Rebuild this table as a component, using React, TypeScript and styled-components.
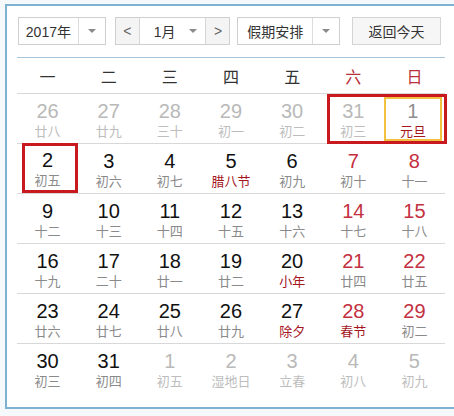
import React from "react";
import styled, { createGlobalStyle } from "styled-components";

const Global = createGlobalStyle`
  html, body { margin: 0; padding: 0; background: #f6f9fb; overflow: hidden; }
  body { font-family: "Liberation Sans", "Noto Sans CJK SC", sans-serif; }
`;

const Frame = styled.div`
  box-sizing: border-box;
  margin: 4px 0 0 5px;
  width: 470px;
  height: 405px;
  background: #fff;
  border: 2px solid #7fb1d1;
  border-right: none;
  padding: 11px 0 0 10px;
`;

const Toolbar = styled.div`
  display: flex;
  align-items: stretch;
  height: 28px;
  width: 423px;
  margin-left: 1px;
`;

const Select = styled.div<{ $w: number; $ml: number }>`
  box-sizing: border-box;
  display: flex;
  width: ${(p) => p.$w}px;
  margin-left: ${(p) => p.$ml}px;
  border: 1px solid #cfcfcf;
  background: #fff;
  color: #333;
  font-size: 14px;
`;

const SelectText = styled.div<{ $start?: boolean }>`
  flex: 1;
  display: flex;
  align-items: center;
  justify-content: ${(p) => (p.$start ? "flex-start" : "center")};
  padding-left: ${(p) => (p.$start ? "14px" : "0")};
`;

const ArrowBox = styled.div<{ $w: number; $divider?: boolean }>`
  width: ${(p) => p.$w}px;
  display: flex;
  align-items: center;
  justify-content: center;
  border-left: ${(p) => (p.$divider ? "1px solid #dcdcdc" : "none")};
`;

const Tri = styled.span`
  width: 0;
  height: 0;
  border-left: 4px solid transparent;
  border-right: 4px solid transparent;
  border-top: 4px solid #8a8a8a;
`;

const NavBtn = styled.div<{ $side: "l" | "r" }>`
  width: 23px;
  display: flex;
  align-items: center;
  justify-content: center;
  background: #f4f4f4;
  color: #666;
  font-size: 14px;
  border-${(p) => (p.$side === "l" ? "right" : "left")}: 1px solid #d6d6d6;
`;

const Button = styled.div`
  box-sizing: border-box;
  width: 89px;
  margin-left: 12px;
  border: 1px solid #d4d4d4;
  background: #f6f6f6;
  color: #333;
  font-size: 14px;
  display: flex;
  align-items: center;
  justify-content: center;
`;

const Calendar = styled.div`
  width: 428px;
  margin-top: 12px;
  border-top: 1px solid #a9c6da;
`;

const WeekRow = styled.div`
  display: grid;
  grid-template-columns: repeat(7, 1fr);
  height: 35px;
  border-bottom: 1px solid #d8d8d8;
`;

const WeekDay = styled.div<{ $red?: boolean }>`
  display: flex;
  align-items: center;
  justify-content: center;
  font-size: 16px;
  color: ${(p) => (p.$red ? "#b8303c" : "#333")};
`;

const Row = styled.div<{ $last?: boolean }>`
  display: grid;
  grid-template-columns: repeat(7, minmax(0, 1fr));
  height: 50px;
  box-sizing: border-box;
  border-bottom: ${(p) => (p.$last ? "none" : "1px solid #d8d8d8")};
`;

type Mark = "none" | "box" | "left" | "right";

const RED = "#c8191e";

const markStyle = (m: Mark) => {
  switch (m) {
    case "box":
      return `border: 3px solid ${RED}; margin: -1px 0 0 5px; padding-right: 5px;`;
    case "left":
      return `border: 3px solid ${RED}; border-right: none; margin-left: 4px; padding-right: 7px;`;
    case "right":
      return `border: 3px solid ${RED}; border-left: none; margin-right: -2px; padding-right: 2px;`;
    default:
      return `border: 3px solid transparent;`;
  }
};

const Cell = styled.div<{ $mark: Mark }>`
  box-sizing: border-box;
  height: 50px;
  display: flex;
  ${(p) => markStyle(p.$mark)}
`;

const Inner = styled.div<{ $today?: boolean }>`
  flex: 1;
  box-sizing: border-box;
  border: 2px solid ${(p) => (p.$today ? "#f2c141" : "transparent")};
  display: flex;
  flex-direction: column;
  align-items: center;
  padding-top: 1px;
`;

const Num = styled.div<{ $c: string }>`
  font-size: 20px;
  line-height: 22px;
  color: ${(p) => p.$c};
`;

const Lunar = styled.div<{ $c: string }>`
  margin-top: 2px;
  font-size: 13px;
  line-height: 15px;
  color: ${(p) => p.$c};
`;

type Day = {
  n: number;
  l: string;
  kind: "out" | "norm" | "wk";
  fest?: boolean;
  mark?: Mark;
  today?: boolean;
};

const g = (n: number, l: string): Day => ({ n, l, kind: "out" });
const d = (n: number, l: string, fest = false): Day => ({ n, l, kind: "norm", fest });
const w = (n: number, l: string, fest = false): Day => ({ n, l, kind: "wk", fest });

const rows: Day[][] = [
  [
    g(26, "廿八"),
    g(27, "廿九"),
    g(28, "三十"),
    g(29, "初一"),
    g(30, "初二"),
    { n: 31, l: "初三", kind: "out", mark: "left" },
    { n: 1, l: "元旦", kind: "out", fest: true, mark: "right", today: true },
  ],
  [
    { n: 2, l: "初五", kind: "norm", mark: "box" },
    d(3, "初六"),
    d(4, "初七"),
    d(5, "腊八节", true),
    d(6, "初九"),
    w(7, "初十"),
    w(8, "十一"),
  ],
  [d(9, "十二"), d(10, "十三"), d(11, "十四"), d(12, "十五"), d(13, "十六"), w(14, "十七"), w(15, "十八")],
  [d(16, "十九"), d(17, "二十"), d(18, "廿一"), d(19, "廿二"), d(20, "小年", true), w(21, "廿四"), w(22, "廿五")],
  [d(23, "廿六"), d(24, "廿七"), d(25, "廿八"), d(26, "廿九"), d(27, "除夕", true), w(28, "春节", true), w(29, "初二")],
  [d(30, "初三"), d(31, "初四"), g(1, "初五"), g(2, "湿地日"), g(3, "立春"), g(4, "初八"), g(5, "初九")],
];

const numColor = (x: Day) =>
  x.today ? "#8f8f8f" : x.kind === "out" ? "#b9b9b9" : x.kind === "wk" ? "#c3303f" : "#111";
const lunarColor = (x: Day) =>
  x.fest ? "#a5161d" : x.kind === "out" ? "#bdbdbd" : "#8a8a8a";

const weekDays = ["一", "二", "三", "四", "五", "六", "日"];

export default function App() {
  return (
    <>
      <Global />
      <Frame>
        <Toolbar>
          <Select $w={88} $ml={0}>
            <SelectText>2017年</SelectText>
            <ArrowBox $w={26} $divider>
              <Tri />
            </ArrowBox>
          </Select>
          <Select $w={116} $ml={9}>
            <NavBtn $side="l">&lt;</NavBtn>
            <SelectText $start>1月</SelectText>
            <ArrowBox $w={24}>
              <Tri />
            </ArrowBox>
            <NavBtn $side="r">&gt;</NavBtn>
          </Select>
          <Select $w={103} $ml={7}>
            <SelectText>假期安排</SelectText>
            <ArrowBox $w={26} $divider>
              <Tri />
            </ArrowBox>
          </Select>
          <Button>返回今天</Button>
        </Toolbar>
        <Calendar>
          <WeekRow>
            {weekDays.map((x, i) => (
              <WeekDay key={x} $red={i >= 5}>
                {x}
              </WeekDay>
            ))}
          </WeekRow>
          {rows.map((r, ri) => (
            <Row key={ri} $last={ri === rows.length - 1}>
              {r.map((x, ci) => (
                <Cell key={ci} $mark={x.mark ?? "none"}>
                  <Inner $today={x.today}>
                    <Num $c={numColor(x)}>{x.n}</Num>
                    <Lunar $c={lunarColor(x)}>{x.l}</Lunar>
                  </Inner>
                </Cell>
              ))}
            </Row>
          ))}
        </Calendar>
      </Frame>
    </>
  );
}
